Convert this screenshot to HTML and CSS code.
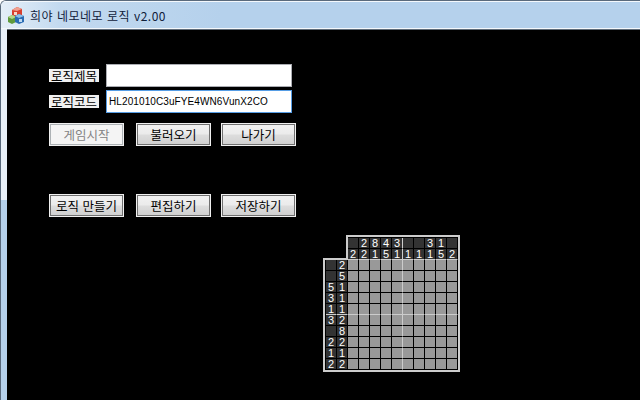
FILE: index.html
```html
<!DOCTYPE html>
<html lang="ko">
<head>
    <meta charset="UTF-8">
    <title>희야 네모네모 로직 v2.00</title>
    <link rel="stylesheet" href="styles.css">
</head>
<body>

<div class="window">
    <div class="titlebar">
        <svg class="app-icon" width="16" height="17" viewBox="0 0 16 17">
            <polygon points="4,3 9,0 14,2 14,8 9,10 4,8" fill="#d8402f"/>
            <polygon points="4,3 9,0 14,2 9,4" fill="#f0a090"/>
            <rect x="6" y="5" width="3" height="3" fill="#f6d8c8"/>
            <polygon points="0,10 4,8 8,10 8,15 4,17 0,15" fill="#5f9a3c"/>
            <polygon points="0,10 4,8 8,10 4,12" fill="#b4d88c"/>
            <polygon points="7,9 11,7 16,9 16,15 11,17 7,15" fill="#2a6cb4"/>
            <polygon points="7,9 11,7 16,9 11,11" fill="#8cc0e8"/>
            <rect x="11" y="12" width="3" height="3" fill="#bcd8f0"/>
        </svg>
        <span class="title">희야 네모네모 로직 v2.00</span>
    </div>
    <div class="client">
        <div class="field-row">
            <label class="field-label">로직제목</label>
            <input class="field" type="text" value="">
        </div>
        <div class="field-row code-row">
            <label class="field-label">로직코드</label>
            <input class="field focused" type="text" value="HL201010C3uFYE4WN6VunX2CO">
        </div>
        <div class="button-row first">
            <button class="btn" disabled>게임시작</button>
            <button class="btn">불러오기</button>
            <button class="btn">나가기</button>
        </div>
        <div class="button-row second">
            <button class="btn">로직 만들기</button>
            <button class="btn">편집하기</button>
            <button class="btn">저장하기</button>
        </div>
        <div class="puzzle">
            <div class="notch"></div>
            <div class="puzzle-grid" id="puzzle"></div>
        </div>
    </div>
</div>

<script src="app.js"></script>

</body>
</html>
```

FILE: styles.css
```css
html, body {
    margin: 0;
    padding: 0;
}
body {
    width: 640px;
    height: 400px;
    overflow: hidden;
    background: #fff;
    font-family: "Noto Sans CJK KR", "Liberation Sans", sans-serif;
}
.window {
    height: 400px;
    display: flex;
    flex-direction: column;
    background: linear-gradient(#e9f1f9 199px, #b5d1ec 199px);
    border-top: 1px solid #5a6a7c;
    border-left: 1px solid #5a6a7c;
    border-top-left-radius: 6px;
    box-sizing: border-box;
    overflow: hidden;
}
.titlebar {
    height: 28px;
    flex: none;
    display: flex;
    align-items: center;
    padding-left: 7px;
    gap: 6px;
    border-top: 1px solid #f4f8fc;
    border-bottom: 1px solid #f4f8fc;
    background: linear-gradient(to right, #e4eef8, #c2d9ef 60px, #b5d1ec 220px);
    box-sizing: border-box;
}
.title {
    font-size: 12px;
    letter-spacing: 0.5px;
    color: #10203a;
}
.client {
    flex: 1;
    margin-left: 6px;
    background: #000;
    border-top: 1px solid #5f6b78;
    padding-top: 34px;
    padding-left: 42px;
    box-sizing: border-box;
}
.field-row {
    display: flex;
    align-items: center;
    gap: 7px;
    height: 23px;
}
.code-row {
    margin-top: 3px;
}
.field-label {
    background: #f0f0f0;
    color: #000;
    font-size: 12.5px;
    line-height: 13px;
    height: 13px;
    width: 50px;
    text-align: center;
    white-space: nowrap;
}
.field {
    width: 186px;
    height: 23px;
    box-sizing: border-box;
    border: 1px solid #abadb3;
    background: #fff;
    padding: 0 2px;
    font-family: "Liberation Sans", sans-serif;
    font-size: 10px;
    letter-spacing: 0.1px;
    color: #000;
    outline: none;
}
.field.focused {
    border-color: #569de5;
}
.button-row {
    display: grid;
    grid-template-columns: 87px 85px 75px;
}
.button-row.first {
    margin-top: 10px;
}
.button-row.second {
    margin-top: 48px;
}
.btn {
    width: 75px;
    height: 23px;
    padding: 0;
    box-sizing: border-box;
    border: 1px solid #f0f0f0;
    outline: 1px solid #707070;
    outline-offset: -2px;
    background: linear-gradient(#f2f2f2, #ebebeb 48%, #dddddd 52%, #cfcfcf);
    color: #000;
    font-family: inherit;
    font-size: 12.5px;
    white-space: nowrap;
}
.btn:disabled {
    background: #f4f4f4;
    outline-color: #adb2b5;
    color: #838383;
}
.puzzle {
    position: relative;
    width: 137px;
    height: 137px;
    box-sizing: border-box;
    margin-top: 18px;
    margin-left: 274px;
    padding: 2px;
    background: #ccc;
}
.notch {
    position: absolute;
    left: 0;
    top: 0;
    width: 23px;
    height: 23px;
    background: #000;
    box-shadow: 2px 2px 0 #ccc;
}
.puzzle-grid {
    display: grid;
    grid-template-columns: repeat(12, 11px);
    grid-auto-rows: 11px;
    padding: 1px 0 0 1px;
    background: #000;
}
.cell {
    box-sizing: border-box;
    border-right: 1px solid #000;
    border-bottom: 1px solid #000;
    background: #999;
}
.cell.clue {
    background: #333;
    color: #fff;
    font-family: "Liberation Sans", sans-serif;
    font-size: 11px;
    line-height: 10px;
    text-align: center;
}
.cell.blank {
    background: #000;
}
.cell.major-r {
    border-right-color: #ccc;
}
.cell.major-b {
    border-bottom-color: #ccc;
}
```

FILE: app.js
```js
var topClues = [
    ['', '2'], ['2', '2'], ['8', '1'], ['4', '5'], ['3', '1'],
    ['', '1'], ['', '1'], ['3', '1'], ['1', '5'], ['', '2']
];
var leftClues = [
    ['', '2'], ['', '5'], ['5', '1'], ['3', '1'], ['1', '1'],
    ['3', '2'], ['', '8'], ['2', '2'], ['1', '1'], ['2', '2']
];
var puzzle = document.getElementById('puzzle');

function addCell(className, text) {
    var cell = document.createElement('div');
    cell.className = 'cell ' + className;
    cell.textContent = text || '';
    puzzle.appendChild(cell);
}

for (var row = 0; row < 2; row++) {
    addCell('blank');
    addCell('blank');
    for (var i = 0; i < 10; i++) {
        addCell('clue' + (i == 4 ? ' major-r' : '') + (row == 1 ? ' major-b' : ''), topClues[i][row]);
    }
}
for (var r = 0; r < 10; r++) {
    var major = r == 4 ? ' major-b' : '';
    addCell('clue' + major, leftClues[r][0]);
    addCell('clue' + major, leftClues[r][1]);
    for (var c = 0; c < 10; c++) {
        addCell(major + (c == 4 ? ' major-r' : ''));
    }
}
```
